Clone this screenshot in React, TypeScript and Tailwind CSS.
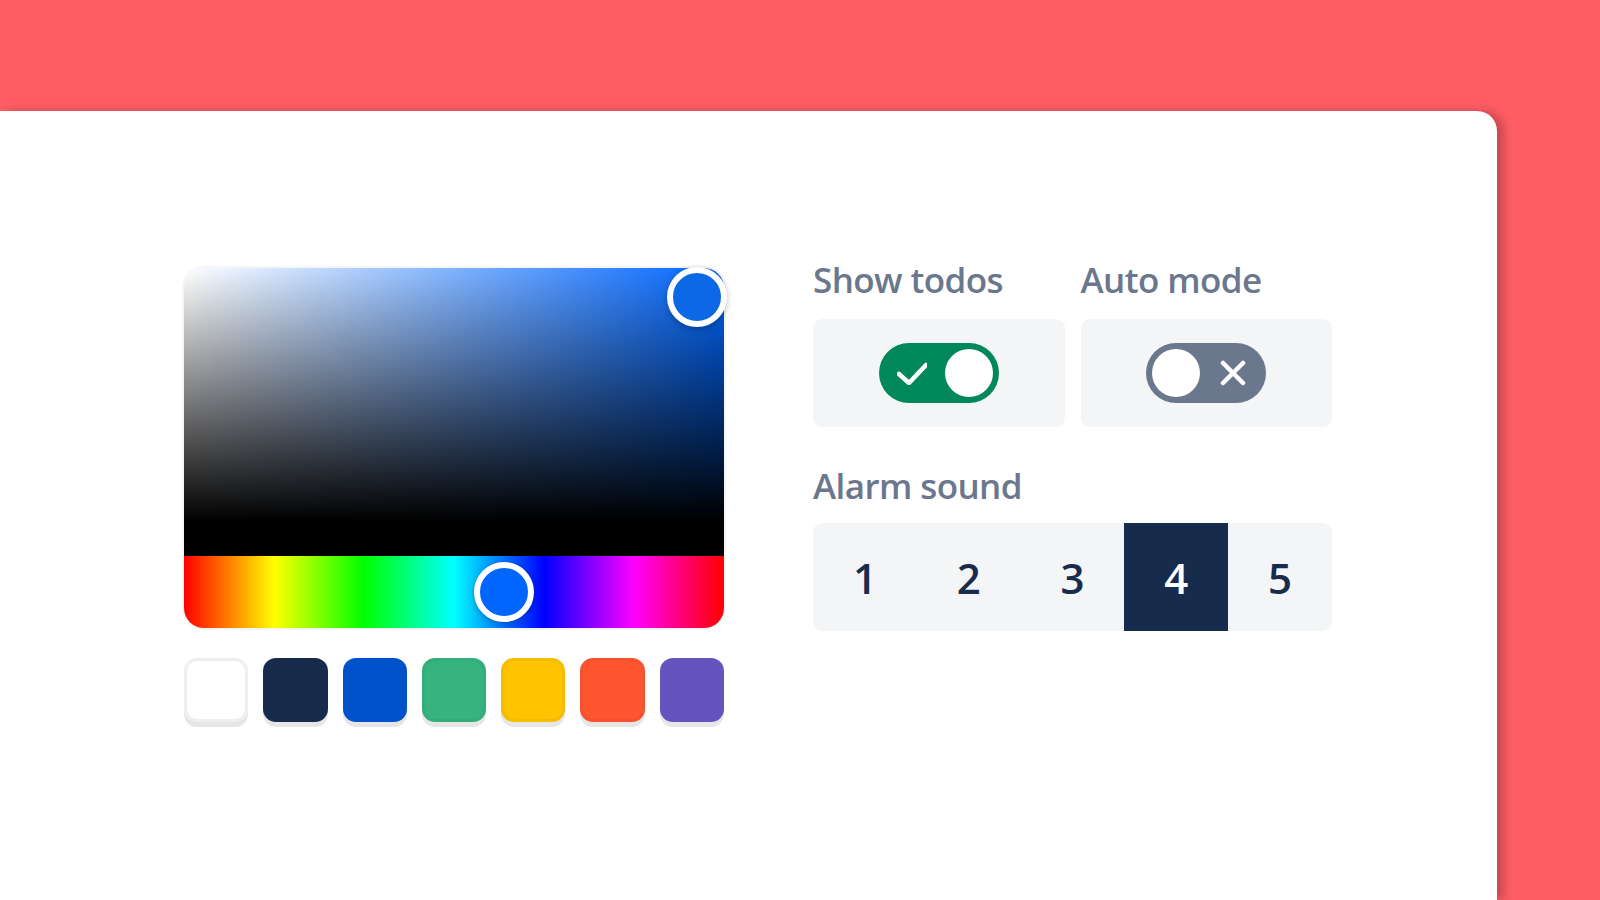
import React from "react";

const swatches = [
  { c: "bg-white", b: "border-[#efefef]" },
  { c: "bg-[#172b4d]", b: "border-[#172b4d]" },
  { c: "bg-[#0052cc]", b: "border-[#0052cc]" },
  { c: "bg-[#36b37e]", b: "border-[#33ad79]" },
  { c: "bg-[#ffc400]", b: "border-[#f5bc00]" },
  { c: "bg-[#ff5630]", b: "border-[#f5522d]" },
  { c: "bg-[#6554c0]", b: "border-[#6554c0]" },
];

function ColorPicker() {
  return (
    <div className="mt-[15px] w-[540px] flex flex-col">
      <div className="relative w-[540px] h-[360px]">
        <div className="w-full h-full rounded-[20px] overflow-hidden flex flex-col shadow-[0_0_0_2px_rgba(0,0,0,0.04)]">
          <div className="h-[288px] w-full bg-[linear-gradient(to_top,#000_12%,rgba(0,0,0,0)_100%),linear-gradient(to_right,#fff,#0066ff)]" />
          <div className="h-[72px] w-full bg-[linear-gradient(to_right,#f00_0%,#ff0_16.7%,#0f0_33.3%,#0ff_50%,#00f_66.7%,#f0f_83.3%,#f00_100%)]" />
        </div>
        <div className="absolute top-[-1px] right-[-3px] w-[60px] h-[60px] rounded-full border-[6px] border-white bg-[#0d68e6] shadow-[0_2px_6px_rgba(0,0,0,0.25)]" />
        <div className="absolute top-[294px] left-[290px] w-[60px] h-[60px] rounded-full border-[6px] border-white bg-[#0066ff] shadow-[0_2px_6px_rgba(0,0,0,0.25)]" />
      </div>
      <div className="mt-[30px] grid grid-cols-7 gap-[15px]">
        {swatches.map((s, i) => (
          <div
            key={i}
            className={`h-[64px] rounded-[13px] border-[3px] ${s.c} ${s.b} shadow-[0_5px_0_#e6e6e6]`}
          />
        ))}
      </div>
    </div>
  );
}

function Label({ children }: { children: React.ReactNode }) {
  return (
    <div className="pt-[2px] text-[35px] leading-[50px] font-semibold text-[#6b778c] tracking-[-0.6px]">
      {children}
    </div>
  );
}

function ToggleOn() {
  return (
    <div className="w-[120px] h-[60px] rounded-full bg-[#00875a] flex items-center justify-between pl-[18px] pr-[6px]">
      <svg width="30" height="24" viewBox="0 0 30 24" fill="none">
        <polyline
          points="2,13 12,22 29,4"
          stroke="white"
          strokeWidth="4.5"
          strokeLinecap="round"
          strokeLinejoin="round"
        />
      </svg>
      <div className="w-[48px] h-[48px] rounded-full bg-white" />
    </div>
  );
}

function ToggleOff() {
  return (
    <div className="w-[120px] h-[60px] rounded-full bg-[#6b778c] flex items-center justify-between pl-[6px] pr-[20px]">
      <div className="w-[48px] h-[48px] rounded-full bg-white" />
      <svg width="26" height="26" viewBox="0 0 26 26" fill="none">
        <path
          d="M3 3 L23 23 M23 3 L3 23"
          stroke="white"
          strokeWidth="4.5"
          strokeLinecap="round"
        />
      </svg>
    </div>
  );
}

function Settings() {
  return (
    <div className="w-[519px] flex flex-col">
      <div className="grid grid-cols-2 gap-[16px]">
        <div className="flex flex-col">
          <Label>Show todos</Label>
          <div className="mt-[14px] h-[108px] rounded-[9px] bg-[#f4f5f7] flex items-center justify-center">
            <ToggleOn />
          </div>
        </div>
        <div className="flex flex-col">
          <Label>Auto mode</Label>
          <div className="mt-[14px] h-[108px] rounded-[9px] bg-[#f4f5f7] flex items-center justify-center">
            <ToggleOff />
          </div>
        </div>
      </div>
      <div className="mt-[32px]">
        <Label>Alarm sound</Label>
      </div>
      <div className="mt-[12px] h-[108px] rounded-[9px] bg-[#f4f5f7] overflow-hidden grid grid-cols-5">
        {[1, 2, 3, 4, 5].map((n) => (
          <div
            key={n}
            className={`flex items-center justify-center text-[42px] font-semibold ${
              n === 4 ? "bg-[#172b4d] text-white" : "text-[#172b4d]"
            }`}
          >
            {n}
          </div>
        ))}
      </div>
    </div>
  );
}

export default function App() {
  return (
    <div
      className="w-[1600px] h-[900px] bg-[#ff5d64] overflow-hidden pt-[111px]"
      style={{ fontFamily: '"Open Sans", "Noto Sans", sans-serif' }}
    >
      <div className="w-[1497px] h-[789px] bg-white rounded-tr-[20px] shadow-[7px_0_10px_rgba(0,0,0,0.22)] pl-[184px] pt-[142px] flex items-start gap-[89px]">
        <ColorPicker />
        <Settings />
      </div>
    </div>
  );
}
